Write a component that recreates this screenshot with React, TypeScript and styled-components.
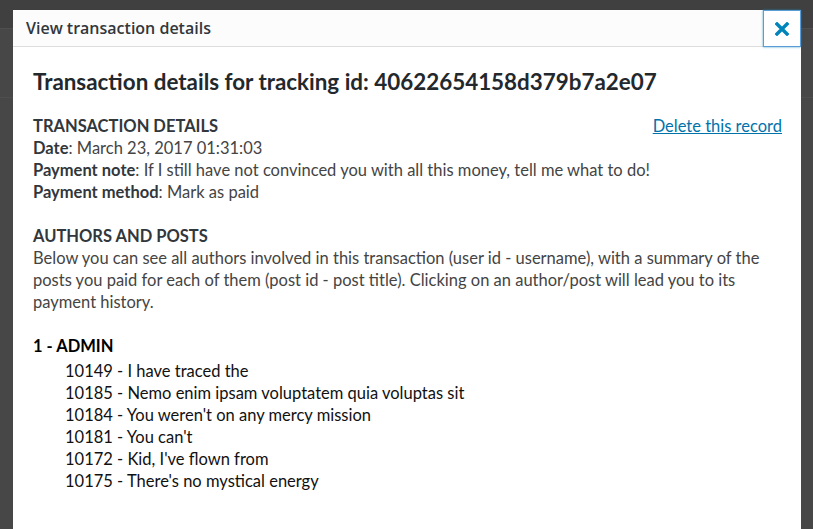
import React from "react";
import styled, { createGlobalStyle } from "styled-components";

const GlobalStyle = createGlobalStyle`
  html, body {
    margin: 0;
    padding: 0;
    height: 100%;
    overflow: hidden;
  }
  body {
    font-family: Lato, "Open Sans", sans-serif;
    background: #474747;
  }
`;

const posts = [
  { id: 10149, title: "I have traced the" },
  { id: 10185, title: "Nemo enim ipsam voluptatem quia voluptas sit" },
  { id: 10184, title: "You weren't on any mercy mission" },
  { id: 10181, title: "You can't" },
  { id: 10172, title: "Kid, I've flown from" },
  { id: 10175, title: "There's no mystical energy" },
];

const App: React.FC = () => {
  return (
    <>
      <GlobalStyle />
      <Page>
        <PageBar />
        <PageStrip />
        <Backdrop>
          <Modal>
            <ModalHeader>
              <ModalTitle>View transaction details</ModalTitle>
              <CloseButton aria-label="Close">
                <svg width="14" height="14" viewBox="0 0 14 14">
                  <path
                    d="M2 2 L12 12 M12 2 L2 12"
                    stroke="#0085ba"
                    strokeWidth="3.4"
                    strokeLinecap="square"
                  />
                </svg>
              </CloseButton>
            </ModalHeader>
            <ModalBody>
              <Heading>
                Transaction details for tracking id: 40622654158d379b7a2e07
              </Heading>
              <Section>
                <DeleteLink href="#">Delete this record</DeleteLink>
                <SectionLabel>TRANSACTION DETAILS</SectionLabel>
                <Line>
                  <b>Date</b>: March 23, 2017 01:31:03
                </Line>
                <Line>
                  <b>Payment note</b>: If I still have not convinced you with
                  all this money, tell me what to do!
                </Line>
                <Line>
                  <b>Payment method</b>: Mark as paid
                </Line>
              </Section>
              <Section>
                <SectionLabel>AUTHORS AND POSTS</SectionLabel>
                <Line>
                  Below you can see all authors involved in this transaction
                  (user id - username), with a summary of the
                  <br />
                  posts you paid for each of them (post id - post title).
                  Clicking on an author/post will lead you to its
                  <br />
                  payment history.
                </Line>
              </Section>
              <Section>
                <AuthorName>1 - ADMIN</AuthorName>
                <PostList>
                  {posts.map((p) => (
                    <li key={p.id}>
                      {p.id} - {p.title}
                    </li>
                  ))}
                </PostList>
              </Section>
            </ModalBody>
          </Modal>
        </Backdrop>
      </Page>
    </>
  );
};

const Page = styled.div`
  position: relative;
  width: 813px;
  height: 529px;
  overflow: hidden;
  background: #474747;
`;

const PageBar = styled.div`
  height: 28px;
  background: #404040;
  border-bottom: 1px solid #4f4f4f;
`;

const PageStrip = styled.div`
  height: 68px;
  border-bottom: 1px solid #4e4e4e;
`;

const Backdrop = styled.div`
  position: absolute;
  inset: 0;
  padding: 10px 12px 0 13px;
`;

const Modal = styled.div`
  background: #fff;
  height: 600px;
  display: flex;
  flex-direction: column;
`;

const ModalHeader = styled.div`
  display: flex;
  align-items: stretch;
  justify-content: space-between;
  height: 36px;
  background: #fcfcfc;
  border-bottom: 1px solid #dddddd;
`;

const ModalTitle = styled.h1`
  margin: 0;
  padding: 0 13px;
  font-family: "Open Sans", sans-serif;
  font-size: 16px;
  font-weight: 600;
  line-height: 36px;
  color: #32373c;
`;

const CloseButton = styled.button`
  width: 38px;
  height: 37px;
  margin: 0;
  padding: 0;
  display: flex;
  align-items: center;
  justify-content: center;
  background: #fff;
  border: 1px solid #5b9dd9;
  box-shadow: 0 0 2px rgba(30, 140, 190, 0.8);
  cursor: pointer;
`;

const ModalBody = styled.div`
  padding: 20px 19px 0 20px;
  color: #444444;
  font-size: 16.5px;
  line-height: 22px;
`;

const Heading = styled.h2`
  margin: 0 0 18px;
  font-size: 22.4px;
  line-height: 30px;
  font-weight: 700;
  color: #23282d;
`;

const Section = styled.div`
  margin-bottom: 22px;

  b {
    font-weight: 700;
    color: #32373c;
  }
`;

const SectionLabel = styled.div`
  font-weight: 700;
  color: #32373c;
`;

const Line = styled.div``;

const DeleteLink = styled.a`
  float: right;
  color: #0073aa;
  text-decoration: underline;
`;

const AuthorName = styled.div`
  font-weight: 700;
  color: #000;
  margin-bottom: 3px;
`;

const PostList = styled.ul`
  list-style: none;
  margin: 0;
  padding: 0 0 0 32px;
  color: #111;
`;

export default App;
